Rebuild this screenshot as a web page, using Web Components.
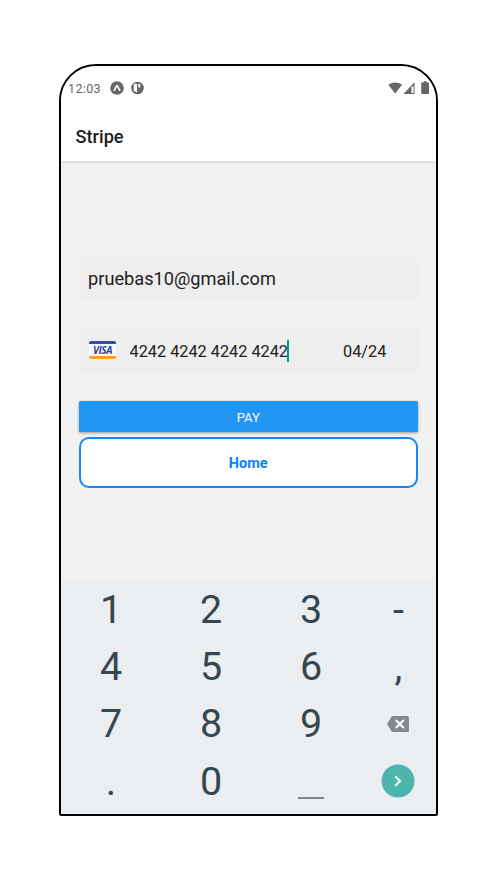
<!DOCTYPE html>
<html lang="es">
<head>
<meta charset="utf-8">
<title>Stripe</title>
<style>
html,body{margin:0;background:#fff}
body{width:488px;height:885px;overflow:hidden;font-family:Roboto,"Liberation Sans",sans-serif}
</style>
</head>
<body>
<phone-frame>
  <status-bar>12:03</status-bar>
  <app-header>Stripe</app-header>
  <checkout-form>
    <text-field>pruebas10@gmail.com</text-field>
    <card-field><span slot="number">4242 4242 4242 4242</span><span slot="expiry">04/24</span></card-field>
    <pay-button>PAY</pay-button>
    <outline-button>Home</outline-button>
  </checkout-form>
  <number-pad></number-pad>
</phone-frame>
<script>
function define(name, html) {
  const template = document.createElement('template');
  template.innerHTML = html;
  customElements.define(name, class extends HTMLElement {
    constructor() {
      super();
      this.attachShadow({ mode: 'open' }).append(template.content.cloneNode(true));
    }
  });
}

define('phone-frame', `
<style>
:host{display:flex;flex-direction:column;box-sizing:border-box;width:379px;height:752px;margin:64px 0 0 59px;
 border:2px solid #000;border-radius:37px 37px 2px 2px;overflow:hidden;background:#f1f1f1}
</style><slot></slot>`);

define('status-bar', `
<style>
:host{display:flex;align-items:center;box-sizing:border-box;height:45px;flex:none;background:#fff;color:#666;font-size:12.5px;letter-spacing:.35px;padding:0 0 1px 7px;
 position:relative;z-index:1}
.time{width:42px}
svg{display:block;flex:none}
.b{margin-left:7px}.w{margin-left:auto}
</style>
<span class="time"><slot></slot></span>
<svg width="14" height="14" viewBox="0 0 14 14"><circle cx="7" cy="7" r="6.8" fill="#666"/><path d="M4 9.8 6.6 4.8h.8L10 9.8" fill="none" stroke="#fff" stroke-width="1.7"/></svg>
<svg class="b" width="13" height="14" viewBox="0 0 13 14"><circle cx="6.5" cy="7" r="6.3" fill="#666"/><path d="M2.8 2.8h3.2v8.600L2.800 10z" fill="#fff"/><path d="M7.300 3h2v3.400h-2z" fill="#fff"/></svg>
<svg class="w" width="48" height="14" viewBox="0 0 48 14">
<path d="M.3 3.8Q7.2-1 14.1 3.8L7.2 12.6z" fill="#666"/>
<path d="M26.500 1.200v11.800H15.400z" fill="#666"/><path d="M23.500 5.500h2V12h-2z" fill="#fff"/>
<path d="M33.700 1.500h2V.2h3.200v1.300h1.300q.8 0 .8.8v10q0 .8-.8.8h-6.200q-.8 0-.8-.8v-10q0-.8.500-.8z" fill="#666"/>
</svg>`);

define('app-header', `
<style>
:host{display:flex;align-items:center;box-sizing:border-box;height:50px;flex:none;background:#fff;padding:0 14.5px;
 font-size:18.2px;font-weight:500;color:#1c1c1e;box-shadow:0 1px 3px rgba(0,0,0,.15);position:relative}
</style><span><slot></slot></span>`);

define('checkout-form', `
<style>
:host{display:flex;flex-direction:column;box-sizing:border-box;height:420px;flex:none;padding:94px 18.5px 0 18px;
 background:linear-gradient(#ebebeb,#ebebeb) 0 418px/100% 1px no-repeat}
</style><slot></slot>`);

define('text-field', `
<style>
:host{display:flex;align-items:center;box-sizing:border-box;height:45px;background:#eee;border-radius:6px;padding:2px 9px 0;
 font-size:18.2px;color:#212121;margin-bottom:28px}
</style><span><slot></slot></span>`);

define('card-field', `
<style>
:host{display:flex;align-items:center;box-sizing:border-box;height:46px;background:#eee;padding:0 10px;
 font-size:16.3px;color:#212121;margin-bottom:27px;white-space:nowrap}
.brand{display:flex;flex-direction:column;width:27px;height:18px;margin:-2px 13.5px 0 0;border-radius:2px;overflow:hidden;flex:none;
 box-sizing:border-box;border-top:3px solid #3350a0;border-bottom:3px solid #ffa21d;background:#f5f8fe;color:#26479b;
 font:italic 700 10px/12px "Open Sans",sans-serif;letter-spacing:-.4px;align-items:center}
.number{width:158px;flex:none}
.caret{width:2px;height:22px;background:#009688;margin:-1px 54px 0 -.5px;flex:none}
</style>
<div class="brand">VISA</div><div class="number"><slot name="number"></slot></div><div class="caret"></div><div><slot name="expiry"></slot></div>`);

define('pay-button', `
<style>
:host{display:flex;align-items:center;justify-content:center;height:31px;background:#2196f3;border-radius:1.5px;color:#fff;
 font-size:13px;box-shadow:0 1px 3px rgba(0,0,0,.38);margin-bottom:5px}
span{padding-top:1px}
</style><span><slot></slot></span>`);

define('outline-button', `
<style>
:host{display:flex;align-items:center;justify-content:center;box-sizing:border-box;height:51px;background:#fff;
 border:2px solid #1488fa;border-radius:10px;color:#0782f9;font-size:14.5px;font-weight:700}
span{padding-top:1px}
</style><span><slot></slot></span>`);

define('number-pad', `
<style>
:host{display:grid;grid-template-columns:100px 100px 100px 75px;grid-template-rows:repeat(4,57.2px);flex:1;background:#ebeef1;
 border-top:1px solid #f5f6f7;margin-top:-1px;color:#37474f;font-size:39.5px;line-height:57px}
div{display:flex;align-items:center;justify-content:center}
svg{display:block;margin-right:1px}
.line{width:26px;height:1.5px;background:#7b878b;margin-top:34px}
</style>
<div>1</div><div>2</div><div>3</div><div>-</div>
<div>4</div><div>5</div><div>6</div><div>,</div>
<div>7</div><div>8</div><div>9</div>
<div><svg width="22" height="16" viewBox="0 0 22 16"><path d="M5.8 0H20.5Q22 0 22 1.5v13q0 1.5-1.5 1.5H5.8Q5 16 4.5 15.3L0 8 4.5.7Q5 0 5.8 0z" fill="#808b8f"/><path d="m8.8 4 8 8m0-8-8 8" stroke="#fff" stroke-width="2"/></svg></div>
<div>.</div><div>0</div><div><i class="line"></i></div>
<div><svg width="34" height="34" viewBox="0 0 34 34"><circle cx="17" cy="17" r="16.5" fill="#4db6ac"/><path d="m14.3 12.3 4.7 4.7-4.7 4.7" fill="none" stroke="#fff" stroke-width="2"/></svg></div>`);
</script>
</body>
</html>
